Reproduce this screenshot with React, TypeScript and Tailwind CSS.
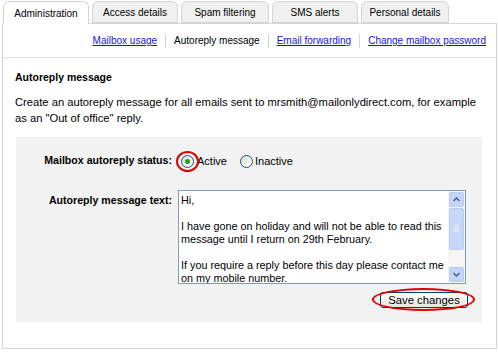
import React from "react";

const tabs = [
  { label: "Administration", w: "w-[86px]", active: true },
  { label: "Access details", w: "w-[86px]", active: false },
  { label: "Spam filtering", w: "w-[88px]", active: false },
  { label: "SMS alerts", w: "w-[86px]", active: false },
  { label: "Personal details", w: "w-[88px]", active: false },
];

const links = [
  { label: "Mailbox usage", link: true },
  { label: "Autoreply message", link: false },
  { label: "Email forwarding", link: true },
  { label: "Change mailbox password", link: true },
];

const messageLines = [
  "Hi,",
  "",
  "I have gone on holiday and will not be able to read this",
  "message until I return on 29th February.",
  "",
  "If you require a reply before this day please contact me",
  "on my mobile number.",
];

function Radio({ checked }: { checked: boolean }) {
  return (
    <span className="flex h-[13px] w-[13px] items-center justify-center rounded-full border border-[#1c5180] bg-gradient-to-br from-[#dcdcd6] to-white">
      {checked && <span className="h-[5px] w-[5px] rounded-full bg-[#21a121]" />}
    </span>
  );
}

function ScrollBar() {
  return (
    <div className="flex w-[17px] flex-col gap-[1px] bg-[#f5f5f2] p-[1px]">
      <div className="flex h-[15px] items-center justify-center rounded-[2px] border border-[#b9cbf3] bg-[#c4d5fc]">
        <svg width="7" height="5" viewBox="0 0 7 5">
          <path d="M0.5 4 L3.5 1 L6.5 4" fill="none" stroke="#4d6185" strokeWidth="1.5" />
        </svg>
      </div>
      <div className="flex h-[42px] items-center justify-center rounded-[2px] border border-[#b9cbf3] bg-[#c8d6fb]">
        <div className="flex flex-col gap-[1px]">
          <div className="h-px w-[5px] bg-[#eef3fe]" />
          <div className="h-px w-[5px] bg-[#eef3fe]" />
          <div className="h-px w-[5px] bg-[#eef3fe]" />
          <div className="h-px w-[5px] bg-[#eef3fe]" />
        </div>
      </div>
      <div className="flex-1" />
      <div className="flex h-[15px] items-center justify-center rounded-[2px] border border-[#b9cbf3] bg-[#c4d5fc]">
        <svg width="7" height="5" viewBox="0 0 7 5">
          <path d="M0.5 1 L3.5 4 L6.5 1" fill="none" stroke="#4d6185" strokeWidth="1.5" />
        </svg>
      </div>
    </div>
  );
}

export default function App() {
  return (
    <div className="h-[353px] w-[498px] bg-white font-['Liberation_Sans',Arial,sans-serif] text-[11px] text-black">
      {/* tabs */}
      <div className="flex gap-[3px] pl-[3px] pt-[1px] text-[10px]">
        {tabs.map((t) => (
          <div
            key={t.label}
            className={
              t.active
                ? `${t.w} relative z-10 -mb-px flex h-[23px] items-center justify-center rounded-t-[6px] border border-b-0 border-[#d4d4d4] bg-white`
                : `${t.w} flex h-[22px] items-center justify-center rounded-t-[6px] border border-[#d4d4d4] bg-[#f0f0f0]`
            }
          >
            {t.label}
          </div>
        ))}
      </div>

      {/* panel */}
      <div className="relative ml-[2px] h-[326px] w-[495px] border border-[#d4d4d4]">
        <div className="flex h-[34px] items-center justify-end border-b border-[#dedede] pr-[10px] text-[10px]">
          {links.map((l, i) => (
            <React.Fragment key={l.label}>
              {i > 0 && <span className="mx-[8px] h-[14px] w-px bg-[#d4d4d4]" />}
              <span className={l.link ? "text-[#1515d8] underline" : ""}>{l.label}</span>
            </React.Fragment>
          ))}
        </div>

        <div className="px-[12px] pt-[12px]">
          <div className="text-[10.5px] font-bold leading-[15px]">Autoreply message</div>
          <p className="mt-[9px] text-[11.2px] leading-[16px]">
            Create an autoreply message for all emails sent to mrsmith@mailonlydirect.com, for example as an "Out of office" reply.
          </p>
        </div>

        <div className="ml-[13px] mt-[11px] h-[185px] w-[466px] bg-[#f2f2f2] pt-[16px]">
          <div className="flex items-center">
            <div className="w-[157px] pr-[1px] text-right text-[10.6px] font-bold">Mailbox autoreply status:</div>
            <div className="ml-[8px] flex items-center">
              <span className="relative">
                <Radio checked />
                <span className="absolute -left-[5px] -top-[4px] h-[21px] w-[23px] rounded-[50%] border-2 border-[#e00000]" />
              </span>
              <span className="ml-[3px]">Active</span>
              <span className="ml-[13px]">
                <Radio checked={false} />
              </span>
              <span className="ml-[2px]">Inactive</span>
            </div>
          </div>

          <div className="mt-[20px] flex items-start">
            <div className="w-[157px] pr-[1px] pt-[3px] text-right text-[10.6px] font-bold">Autoreply message text:</div>
            <div className="ml-[5px] flex h-[94px] w-[288px] border border-[#7f9db9] bg-white">
              <div className="flex-1 overflow-hidden pl-[2px] pt-[3px] text-[10.8px] leading-[13px]">
                {messageLines.map((line, i) => (
                  <div key={i} className="h-[13px] whitespace-nowrap">
                    {line}
                  </div>
                ))}
              </div>
              <ScrollBar />
            </div>
          </div>

          <div className="mt-[8px] flex justify-end pr-[14px]">
            <div className="relative">
              <button className="h-[16px] w-[88px] rounded-[3px] border border-[#003c74] bg-gradient-to-b from-white to-[#e6e6e0] text-[11.3px] leading-[14px]">
                Save changes
              </button>
              <span className="absolute -left-[8px] -top-[4px] h-[23px] w-[103px] rounded-[50%] border-2 border-[#e00000]" />
            </div>
          </div>
        </div>
      </div>
    </div>
  );
}
